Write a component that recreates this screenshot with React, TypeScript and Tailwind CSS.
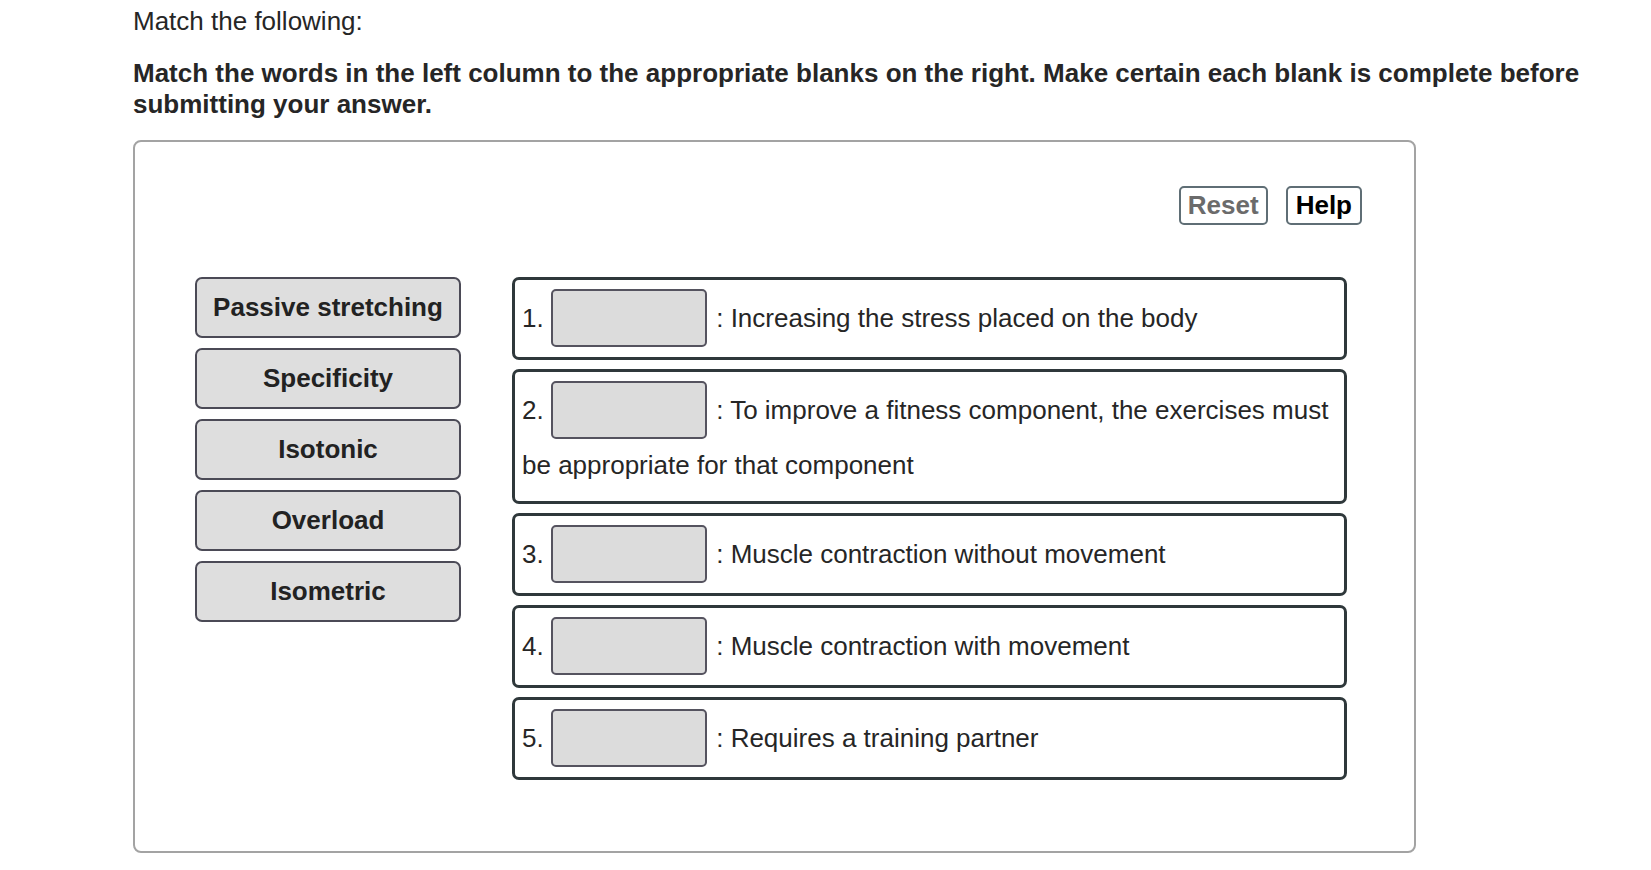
import React from 'react';

const terms = ['Passive stretching', 'Specificity', 'Isotonic', 'Overload', 'Isometric'];

const blanks = [
  'Increasing the stress placed on the body',
  'To improve a fitness component, the exercises must be appropriate for that component',
  'Muscle contraction without movement',
  'Muscle contraction with movement',
  'Requires a training partner',
];

const App: React.FC = () => {
  return (
    <div className="min-h-screen bg-white pl-[133px] pt-[5px] font-['Liberation_Sans',Arial,sans-serif] text-[#262626]">
      <p className="text-[26px] leading-[32px]">Match the following:</p>
      <p className="mt-[21px] w-[1480px] text-[26px] font-bold leading-[31px]">
        Match the words in the left column to the appropriate blanks on the right. Make certain each blank is complete before
        submitting your answer.
      </p>

      <div className="mt-[20px] h-[713px] w-[1283px] rounded-[8px] border-2 border-[#a3a3a3] pt-[44px]">
        <div className="flex justify-end gap-[18px] pr-[52px]">
          <button className="flex h-[39px] items-center rounded-[5px] border-2 border-[#5f6e75] px-[7px] text-[26px] font-bold text-[#6b6b6b]">
            Reset
          </button>
          <button className="flex h-[39px] items-center rounded-[5px] border-2 border-[#5f6e75] px-[8px] text-[26px] font-bold text-black">
            Help
          </button>
        </div>

        <div className="mt-[52px] flex gap-[51px] pl-[60px]">
          <div className="flex w-[266px] flex-col gap-[10px]">
            {terms.map((t) => (
              <div
                key={t}
                className="flex h-[61px] items-center justify-center rounded-[7px] border-[2.5px] border-[#4b4a56] bg-[#dedede] text-[26px] font-bold text-[#222]"
              >
                {t}
              </div>
            ))}
          </div>

          <div className="flex w-[835px] flex-col gap-[9px]">
            {blanks.map((d, i) => (
              <div
                key={i}
                className="rounded-[7px] border-[3px] border-[#2f383b] pb-[10px] pl-[7px] pr-[7px] pt-[9px] text-[26px] leading-[52px] text-[#262626]"
              >
                {i + 1}.{' '}
                <span className="mr-[2px] inline-block h-[58px] w-[156px] rounded-[5px] border-2 border-[#55535f] bg-[#dcdcdc] align-[-20px]" />{' '}
                : {d}
              </div>
            ))}
          </div>
        </div>
      </div>
    </div>
  );
};

export default App;
